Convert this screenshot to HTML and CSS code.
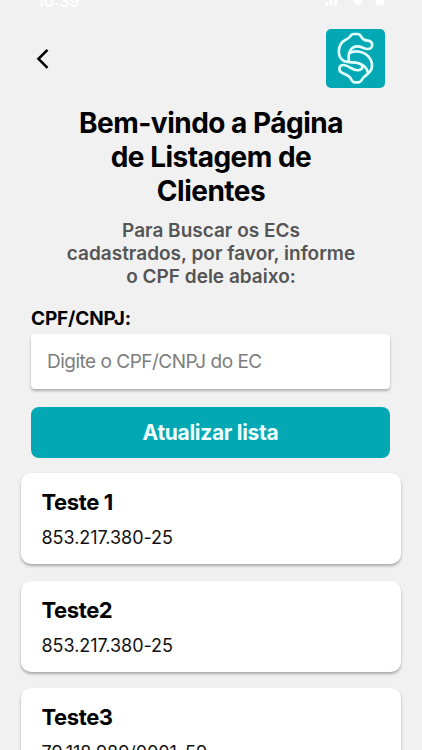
FILE: index.html
```html
<!DOCTYPE html>
<html lang="pt-BR">
<head>
    <meta charset="UTF-8">
    <meta name="viewport" content="width=device-width, initial-scale=1.0">
    <title>Listagem de Clientes</title>
    <link rel="stylesheet" href="styles.css">
</head>
<body>
    <div class="status-bar">
        <span class="status-time">10:39</span>
        <svg class="status-icons" width="80" height="12" viewBox="0 0 80 12" fill="#fff">
            <rect x="0" y="7" width="3" height="4" rx="1"/>
            <rect x="4.5" y="5" width="3" height="6" rx="1"/>
            <rect x="9" y="2" width="3" height="9" rx="1"/>
            <path d="M28 6 Q33 2 38 6 L33 11 Z"/>
            <rect x="50" y="1" width="25" height="10" rx="3" fill="none" stroke="#f6f6f6"/>
            <rect x="51" y="2" width="8" height="8" rx="2"/>
        </svg>
    </div>

    <header class="header">
        <a href="#" class="back" aria-label="Voltar">
            <svg width="14" height="22" viewBox="0 0 14 22" fill="none" stroke="#000" stroke-width="2.6">
                <path d="M12.5 1.8 L3.5 10.8 L12.5 19.8"/>
            </svg>
        </a>
        <svg class="logo" width="59" height="59" viewBox="0 0 177 177">
            <rect width="177" height="177" rx="15" fill="#02a9b4"/>
            <g fill="none" stroke="#e2ffff" stroke-width="8" stroke-linecap="round" stroke-linejoin="round">
                <path d="M69 98 C65 72 73 52 95 52 C107 52 114 60 125 60 C143 60 143 37 125 35 C114 34 110 31 107 25 C103 17 101 15 95 15 L83 15 C77 15 75 18 72 23 C69 28 65 29 58 33 C34 46 33 80 51 94 C64 103 84 98 98 103 C112 108 113 119 100 123 C80 129 70 108 52 108 C38 108 37 124 46 130 C55 136 70 138 75 150 C78 157 81 160 87 160 L97 160 C103 160 106 156 109 150 C114 140 132 135 137 118 C142 94 125 74 104 69 C92 66 82 67 73 71"/>
                <path d="M98 103 C113 108 124 118 126 132"/>
            </g>
        </svg>
    </header>

    <main class="content">
        <h1>Bem-vindo a Página<br>de Listagem de<br>Clientes</h1>
        <p class="subtitle">Para Buscar os ECs<br>cadastrados, por favor, informe<br>o CPF dele abaixo:</p>

        <form class="search-form">
            <label for="cpf">CPF/CNPJ:</label>
            <input type="text" id="cpf" placeholder="Digite o CPF/CNPJ do EC">
            <button type="button">Atualizar lista</button>
        </form>

        <div class="client-list">
            <div class="client-card">
                <h2>Teste 1</h2>
                <p>853.217.380-25</p>
            </div>
            <div class="client-card">
                <h2>Teste2</h2>
                <p>853.217.380-25</p>
            </div>
            <div class="client-card">
                <h2>Teste3</h2>
                <p>79.118.989/0001-59</p>
            </div>
        </div>
    </main>
</body>
</html>
```
FILE: styles.css
```css
* {
    box-sizing: border-box;
}

body {
    font-family: Inter, 'Liberation Sans', sans-serif;
    background-color: #f1f1f1;
    color: #000;
    margin: 0;
    height: 750px;
    overflow: hidden;
}

.status-bar {
    display: flex;
    justify-content: space-between;
    height: 29px;
    padding: 0 17px 0 37px;
    color: #fff;
}

.status-time {
    margin-top: -8px;
    font-size: 16px;
    font-weight: 600;
    line-height: 18px;
}

.status-icons {
    margin-top: -5px;
}

.header {
    display: flex;
    justify-content: space-between;
    align-items: center;
    height: 59px;
    padding: 0 37px 0 35px;
}

.back,
.logo {
    display: block;
}

.back svg {
    display: block;
}

h1 {
    margin: 18px 0 0;
    font-size: 28px;
    font-weight: 700;
    letter-spacing: -0.5px;
    line-height: 34px;
    text-align: center;
}

.subtitle {
    margin: 11px 0 0;
    color: #555;
    font-size: 19px;
    font-weight: 600;
    line-height: 23px;
    text-align: center;
}

.search-form {
    display: flex;
    flex-direction: column;
    margin: 19px 32px 0 31px;
}

label {
    font-size: 19px;
    font-weight: 700;
    letter-spacing: -0.15px;
    line-height: 23px;
}

input {
    height: 55px;
    margin-top: 4px;
    padding: 0 16px;
    background-color: #fff;
    border: none;
    border-radius: 4px;
    box-shadow: 0 2px 3px rgba(0, 0, 0, 0.28);
    font-family: inherit;
    font-size: 19px;
    letter-spacing: -0.5px;
}

input::placeholder {
    color: #7d7d7d;
}

button {
    height: 51px;
    margin-top: 18px;
    padding: 0;
    background-color: #02a9b4;
    color: #f0ffff;
    border: none;
    border-radius: 8px;
    font-family: inherit;
    font-size: 21px;
    font-weight: 700;
    letter-spacing: -0.3px;
}

.client-list {
    display: flex;
    flex-direction: column;
    gap: 16.6px;
    margin: 15px 21px 0;
}

.client-card {
    height: 91px;
    padding: 16px 20.5px;
    background-color: #fff;
    border-radius: 10px;
    box-shadow: 0 2px 3px rgba(0, 0, 0, 0.3);
}

.client-card h2 {
    margin: 0;
    font-size: 22px;
    font-weight: 700;
    letter-spacing: -0.4px;
    line-height: 27px;
}

.client-card p {
    margin: 11px 0 0;
    color: #111;
    font-size: 18px;
    letter-spacing: -0.05px;
    line-height: 22px;
}
```
